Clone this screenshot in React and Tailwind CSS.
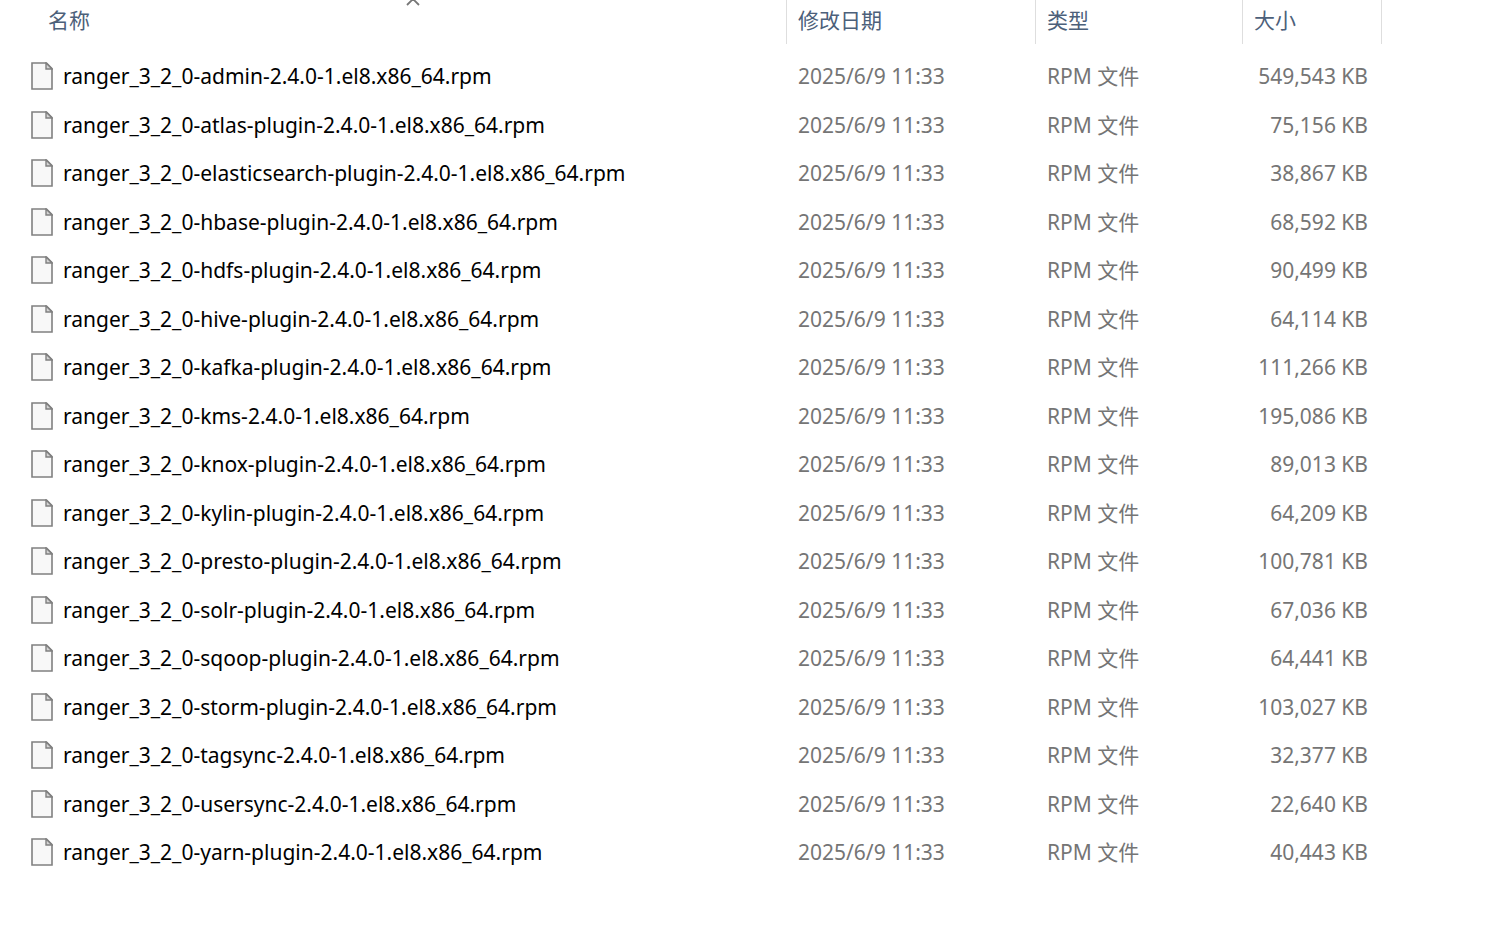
import React from 'react';

const files = [
  ['ranger_3_2_0-admin-2.4.0-1.el8.x86_64.rpm', '549,543 KB'],
  ['ranger_3_2_0-atlas-plugin-2.4.0-1.el8.x86_64.rpm', '75,156 KB'],
  ['ranger_3_2_0-elasticsearch-plugin-2.4.0-1.el8.x86_64.rpm', '38,867 KB'],
  ['ranger_3_2_0-hbase-plugin-2.4.0-1.el8.x86_64.rpm', '68,592 KB'],
  ['ranger_3_2_0-hdfs-plugin-2.4.0-1.el8.x86_64.rpm', '90,499 KB'],
  ['ranger_3_2_0-hive-plugin-2.4.0-1.el8.x86_64.rpm', '64,114 KB'],
  ['ranger_3_2_0-kafka-plugin-2.4.0-1.el8.x86_64.rpm', '111,266 KB'],
  ['ranger_3_2_0-kms-2.4.0-1.el8.x86_64.rpm', '195,086 KB'],
  ['ranger_3_2_0-knox-plugin-2.4.0-1.el8.x86_64.rpm', '89,013 KB'],
  ['ranger_3_2_0-kylin-plugin-2.4.0-1.el8.x86_64.rpm', '64,209 KB'],
  ['ranger_3_2_0-presto-plugin-2.4.0-1.el8.x86_64.rpm', '100,781 KB'],
  ['ranger_3_2_0-solr-plugin-2.4.0-1.el8.x86_64.rpm', '67,036 KB'],
  ['ranger_3_2_0-sqoop-plugin-2.4.0-1.el8.x86_64.rpm', '64,441 KB'],
  ['ranger_3_2_0-storm-plugin-2.4.0-1.el8.x86_64.rpm', '103,027 KB'],
  ['ranger_3_2_0-tagsync-2.4.0-1.el8.x86_64.rpm', '32,377 KB'],
  ['ranger_3_2_0-usersync-2.4.0-1.el8.x86_64.rpm', '22,640 KB'],
  ['ranger_3_2_0-yarn-plugin-2.4.0-1.el8.x86_64.rpm', '40,443 KB'],
];

// FileIcon: blank page with a folded corner
function FileIcon() {
  return (
    <svg className="h-7 w-[22px] shrink-0" viewBox="0 0 22 28" fill="none" aria-hidden="true">
      <path d="M1 1H15.500L21 6.500V27H1z" fill="#f8f8f8" stroke="#808080" strokeWidth="1.600" />
      <path d="M15 1v6h6z" fill="#d4d4d4" stroke="#808080" strokeWidth="1.400" />
    </svg>
  );
}

export default function App() {
  return (
    <main className="min-h-screen bg-white font-['Noto_Sans','Noto_Sans_CJK_SC',sans-serif] text-[21px] leading-6 text-[#757575]">
      <table className="w-full table-fixed border-separate border-spacing-0 whitespace-nowrap">
        <colgroup>
          <col />
          <col className="w-[249px]" />
          <col className="w-[207px]" />
          <col className="w-[139px]" />
          <col className="w-[110px]" />
        </colgroup>
        <thead>
          <tr className="h-11 text-left text-[#4c607a]">
            <th className="relative border-r border-[#dedede] p-0 pb-1 pl-12 font-normal">
              <button>名称</button>
              <svg className="absolute top-0 left-[406px] h-1.5 w-3.5" viewBox="0 0 14 6" fill="none" aria-hidden="true">
                <path d="M1 5l6-6 6 6" stroke="#777" strokeWidth="1.800" />
              </svg>
            </th>
            <th className="border-r border-[#dedede] p-0 pb-1 pl-[11px] font-normal"><button>修改日期</button></th>
            <th className="border-r border-[#dedede] p-0 pb-1 pl-[11px] font-normal"><button>类型</button></th>
            <th className="border-r border-[#dedede] p-0 pb-1 pl-[11px] font-normal"><button>大小</button></th>
            <td />
          </tr>
          <tr className="h-2"><td colSpan={5} /></tr>
        </thead>
        <tbody>
          {files.map(([name, size]) => (
            <tr key={name} className="odd:h-12 even:h-[49px]">
              <td className="p-0 pl-[31px] text-black">
                <div className="flex items-center gap-[10px]">
                  <FileIcon />
                  <span>{name}</span>
                </div>
              </td>
              <td className="p-0 pl-[11px]">2025/6/9 11:33</td>
              <td className="p-0 pl-[11px]">RPM 文件</td>
              <td className="p-0 pr-[14px] text-right">{size}</td>
              <td />
            </tr>
          ))}
        </tbody>
      </table>
    </main>
  );
}
